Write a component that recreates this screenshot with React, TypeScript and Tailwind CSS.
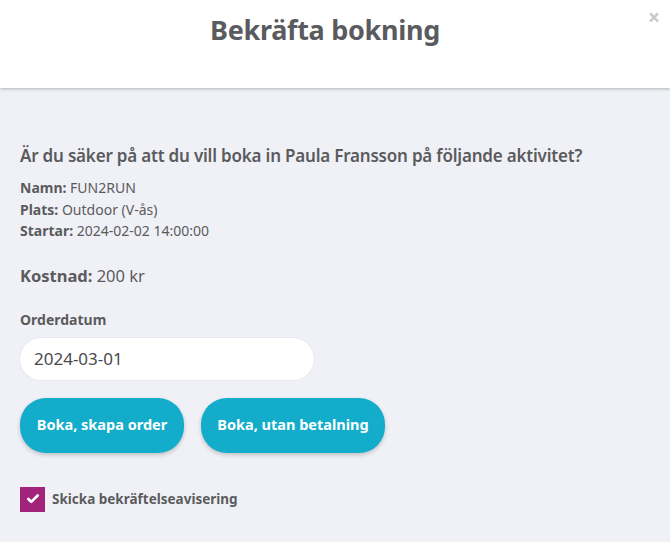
import { Check } from 'lucide-react';

export default function App() {
  return (
    <div
      className="h-[542px] w-[670px] overflow-hidden bg-[#f0f1f6] text-[#5b5b5e]"
      style={{ fontFamily: '"Noto Sans", "Open Sans", sans-serif' }}
    >
      {/* Header */}
      <div className="relative flex h-[88px] items-start justify-center bg-white pr-[20px] pt-[10px] shadow-[0_1px_3px_rgba(0,0,0,0.25)]">
        <h1 className="text-[27px] font-bold tracking-[-0.3px] text-[#5a5b5e]">Bekräfta bokning</h1>
        <button className="absolute right-[10px] top-[7px] text-[21px] font-bold leading-none text-[#c8c8c8]">
          ×
        </button>
      </div>

      {/* Body */}
      <div className="px-[20px] pt-[56px]">
        <p className="text-[17px] font-semibold leading-[24px] tracking-[-0.2px]">
          Är du säker på att du vill boka in Paula Fransson på följande aktivitet?
        </p>
        <div className="mt-[9px] text-[14px] leading-[21.5px]">
          <div>
            <span className="font-bold">Namn:</span> FUN2RUN
          </div>
          <div>
            <span className="font-bold">Plats:</span> Outdoor (V-ås)
          </div>
          <div>
            <span className="font-bold">Startar:</span> 2024-02-02 14:00:00
          </div>
        </div>

        <p className="mt-[22px] text-[16.5px] leading-[24px]">
          <span className="font-bold">Kostnad:</span> 200 kr
        </p>

        <label className="mt-[22px] block text-[14px] font-bold leading-[20px]">Orderdatum</label>
        <div className="mt-[8px] flex h-[42px] w-[294px] items-center rounded-full bg-white px-[14px] text-[17px] text-[#4a4a4d] shadow-[0_0_0_1px_#e8e9ee]">
          2024-03-01
        </div>

        <div className="mt-[18px] flex gap-[17px]">
          <button className="h-[55px] w-[164px] rounded-[26px] bg-[#13adcb] text-[14.5px] font-bold text-white shadow-[0_2px_4px_rgba(0,0,0,0.2)]">
            Boka, skapa order
          </button>
          <button className="h-[55px] w-[184px] rounded-[26px] bg-[#13adcb] text-[14.5px] font-bold text-white shadow-[0_2px_4px_rgba(0,0,0,0.2)]">
            Boka, utan betalning
          </button>
        </div>

        <div className="mt-[34px] flex items-center gap-[7px]">
          <div className="flex h-[25px] w-[25px] items-center justify-center bg-[#a1237a]">
            <Check className="h-[14px] w-[14px] text-white" strokeWidth={4.5} />
          </div>
          <span className="text-[13.5px] font-bold">Skicka bekräftelseavisering</span>
        </div>
      </div>
    </div>
  );
}
